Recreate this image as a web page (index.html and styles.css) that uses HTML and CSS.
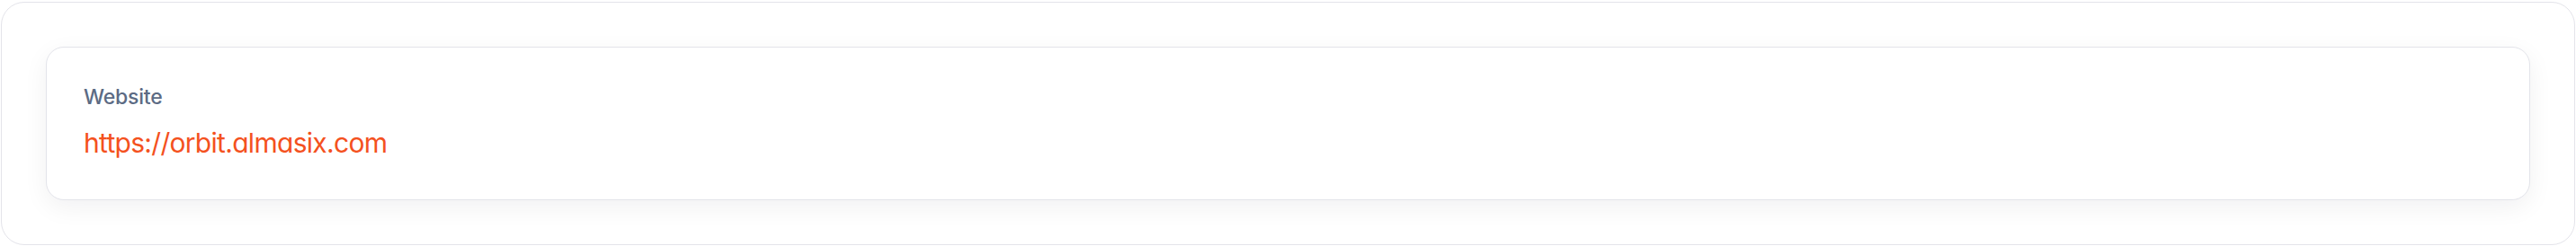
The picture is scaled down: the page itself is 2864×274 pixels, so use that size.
FILE: index.html
```html
<!DOCTYPE html>
<html lang="en">
<head>
<meta charset="utf-8">
<link rel="stylesheet" href="styles.css">
</head>
<body>
  <section class="panel">
    <div class="card">
      <div class="label">Website</div>
      <a class="url" href="#">https://orbit.almasix.com</a>
    </div>
  </section>
</body>
</html>
```

FILE: styles.css
```css
html, body {
  margin: 0;
  padding: 0;
  background: #ffffff;
}

body {
  padding: 2px 1px 1px 1px;
  font-family: "Inter", "Noto Sans", sans-serif;
  font-feature-settings: "cv11" 1;
}

.panel {
  box-sizing: border-box;
  height: 271px;
  border: 1px solid #e4e4ea;
  border-radius: 26px;
  padding: 49px;
  background: #ffffff;
}

.card {
  box-sizing: border-box;
  height: 171px;
  border: 1px solid #e3e4ea;
  border-radius: 20px;
  background: #ffffff;
  box-shadow: 0 8px 28px rgba(20, 24, 40, 0.06);
  padding: 40px 41px;
  display: flex;
  flex-direction: column;
  align-items: flex-start;
  gap: 17px;
}

.label {
  font-size: 23px;
  line-height: 30px;
  font-weight: 500;
  color: #5c6b84;
  letter-spacing: -0.2px;
}

.url {
  font-size: 30px;
  line-height: 38px;
  font-weight: 400;
  color: #f4511e;
  text-decoration: none;
  letter-spacing: -0.7px;
}
```
